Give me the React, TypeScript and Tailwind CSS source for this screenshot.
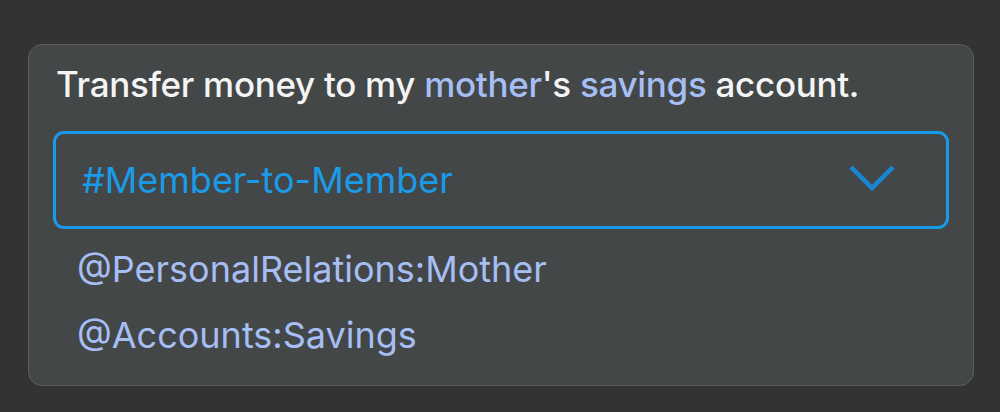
import React from "react";

export default function App() {
  return (
    <div className="w-[1000px] h-[412px] bg-[#333333] pt-[44px] pl-[28px]" style={{ fontFamily: "Inter, 'Noto Sans', sans-serif" }}>
      <div className="w-[946px] h-[342px] bg-[#434748] border border-[#5a5e5f] rounded-[14px] pt-[17px] px-[24px]">
        <div className="text-[35px] font-medium leading-[44px] text-[#f4f4f4] pl-[3px] tracking-[-0.3px]">
          Transfer money to my <span className="text-[#a7bef4]">mother</span>'s{" "}
          <span className="text-[#a7bef4]">savings</span> account.
        </div>
        <div className="mt-[25px] h-[98px] border-[3px] border-[#1a9be8] rounded-[11px] flex items-center justify-between pl-[26px] pr-[51px]">
          <span className="text-[36px] text-[#1a9be8] tracking-[0px]">#Member-to-Member</span>
          <svg width="46" height="28" viewBox="0 0 46 28" className="mb-[4px]">
            <path d="M2 3 L23 24 L44 3" fill="none" stroke="#1587d2" strokeWidth="4.5" />
          </svg>
        </div>
        <div className="mt-[7px] pl-[24px] text-[36px] leading-[66px] text-[#a7bef4] tracking-[0px]">
          <div>@PersonalRelations:Mother</div>
          <div>@Accounts:Savings</div>
        </div>
      </div>
    </div>
  );
}
